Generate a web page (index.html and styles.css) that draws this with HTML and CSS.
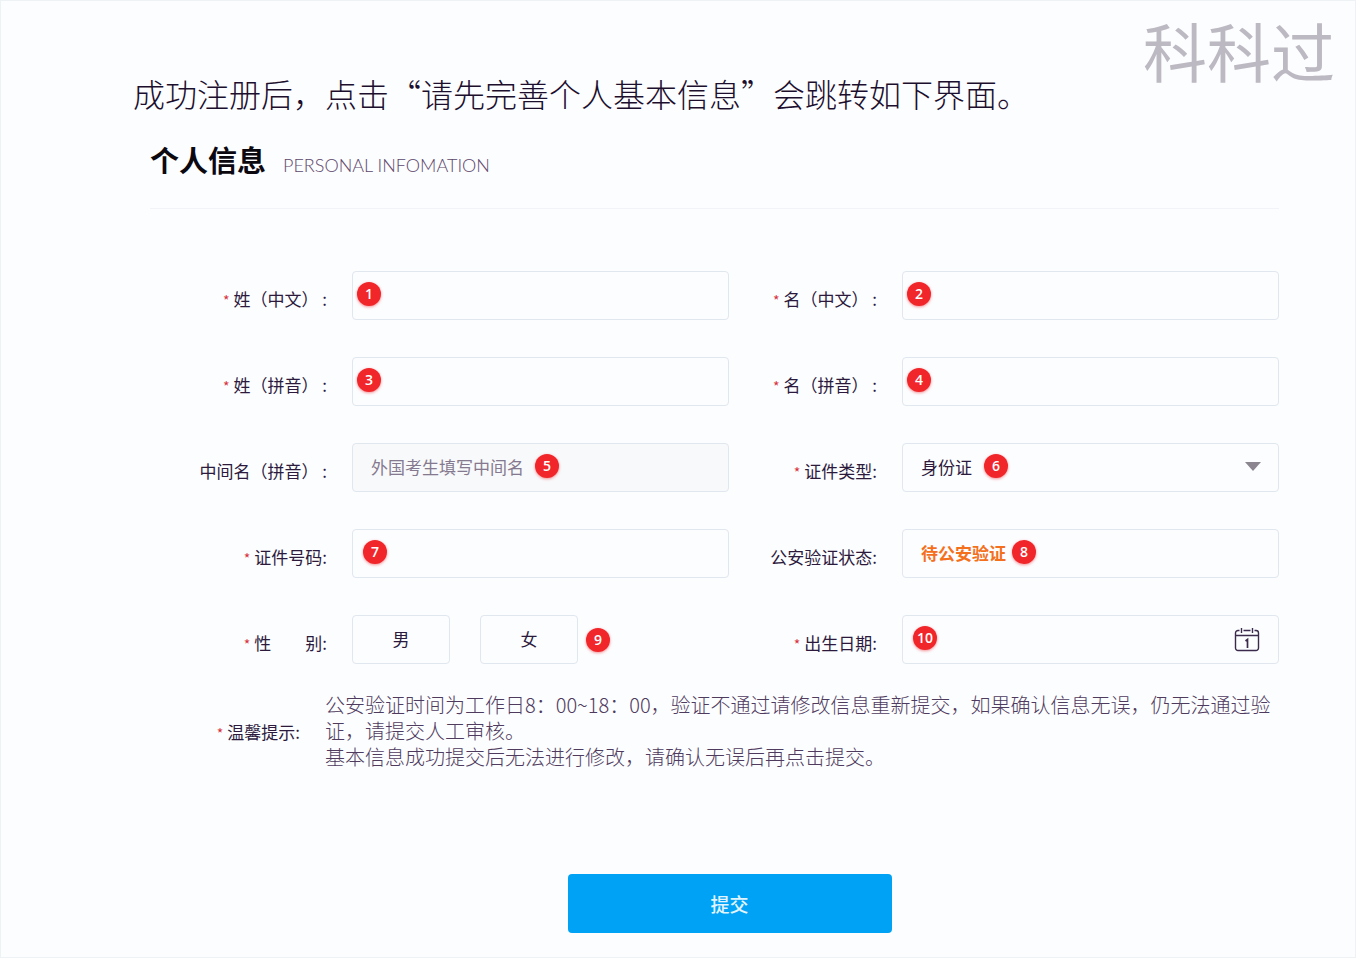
FILE: index.html
```
<!DOCTYPE html>
<html lang="zh-CN">
<head>
  <meta charset="UTF-8" />
  <meta name="viewport" content="width=device-width, initial-scale=1.0"/>
  <title>个人信息</title>
  <link rel="stylesheet" href="styles.css">
</head>
<body>
  <div class="watermark">科科过</div>

  <main class="page">
    <p class="intro">成功注册后&#65292;点击“请先完善个人基本信息”会跳转如下界面。</p>

    <header class="section-title">
      <h1>个人信息</h1>
      <span class="subtitle">PERSONAL INFOMATION</span>
    </header>

    <form>
      <div class="form-grid">
        <label class="label required" for="xing">姓&#65288;中文&#65289; :</label>
        <div class="field">
          <input type="text" id="xing">
          <span class="badge at-edge">1</span>
        </div>
        <label class="label required" for="ming">名&#65288;中文&#65289; :</label>
        <div class="field">
          <input type="text" id="ming">
          <span class="badge at-edge">2</span>
        </div>

        <label class="label required" for="xing-py">姓&#65288;拼音&#65289; :</label>
        <div class="field">
          <input type="text" id="xing-py">
          <span class="badge at-edge">3</span>
        </div>
        <label class="label required" for="ming-py">名&#65288;拼音&#65289; :</label>
        <div class="field">
          <input type="text" id="ming-py">
          <span class="badge at-edge">4</span>
        </div>

        <label class="label" for="middle">中间名&#65288;拼音&#65289; :</label>
        <div class="field">
          <input type="text" id="middle" placeholder="外国考生填写中间名" disabled>
          <span class="badge after-hint">5</span>
        </div>
        <label class="label required" for="id-type">证件类型:</label>
        <div class="field">
          <select id="id-type">
            <option>身份证</option>
          </select>
          <span class="badge after-type">6</span>
          <svg class="arrow" width="16" height="9" viewBox="0 0 16 9"><path d="M0 0h16L8 9z" fill="#8a858e"/></svg>
        </div>

        <label class="label required" for="id-no">证件号码:</label>
        <div class="field">
          <input type="text" id="id-no">
          <span class="badge inset">7</span>
        </div>
        <label class="label" for="status">公安验证状态:</label>
        <div class="field">
          <input type="text" id="status" class="status" value="待公安验证" readonly>
          <span class="badge after-status">8</span>
        </div>

        <span class="label required" id="gender">性&#12288;&#12288;别:</span>
        <div class="choices" role="radiogroup" aria-labelledby="gender">
          <label class="choice"><input type="radio" name="gender">男</label>
          <label class="choice"><input type="radio" name="gender">女</label>
          <span class="badge inline">9</span>
        </div>
        <label class="label required" for="birthday">出生日期:</label>
        <div class="field">
          <input type="text" id="birthday">
          <span class="badge inset">10</span>
          <button type="button" class="calendar" aria-label="选择日期">
            <svg width="26" height="26" viewBox="0 0 26 26" fill="none" stroke="#3b2a4c" stroke-width="1.4">
              <path d="M5.5 3.5H4A2.5 2.5 0 0 0 1.5 6v15A2.5 2.5 0 0 0 4 23.5h18a2.5 2.5 0 0 0 2.5-2.5V6A2.5 2.5 0 0 0 22 3.5h-1.5M9.5 3.5h7M1.5 8.5h23M7.5 1v5M18.5 1v5"/>
              <path d="M11.5 14l2-1.5V21" stroke-width="1.7"/>
            </svg>
          </button>
        </div>
      </div>

      <div class="notice">
        <span class="notice-label required">温馨提示:</span>
        <p class="notice-text">
          公安验证时间为工作日8&#65306;00~18&#65306;00&#65292;验证不通过请修改信息重新提交&#65292;如果确认信息无误&#65292;仍无法通过验证&#65292;请提交人工审核。<br>
          基本信息成功提交后无法进行修改&#65292;请确认无误后再点击提交。
        </p>
      </div>

      <div class="actions">
        <button type="submit" class="submit">提交</button>
      </div>
    </form>
  </main>
</body>
</html>
```
FILE: styles.css
```
* {
  box-sizing: border-box;
}

body {
  margin: 0;
  min-height: 100vh;
  position: relative;
  border: 1px solid #eef2f5;
  background-color: #fcfdff;
  color: #2c1a3d;
  font-family: "Noto Sans CJK SC", sans-serif;
  font-size: 17px;
}

h1,
p {
  margin: 0;
}

.watermark {
  position: absolute;
  top: 8px;
  right: 20px;
  color: #bcb9c2;
  font-size: 64px;
  line-height: 80px;
}

.page {
  padding: 68px 76px 20px 149px;
}

.intro {
  margin-left: -17px;
  color: #1c0f2e;
  font-size: 32px;
  font-weight: 300;
  line-height: 48px;
}

.section-title {
  display: flex;
  align-items: baseline;
  gap: 17px;
  margin-top: 20px;
  padding-bottom: 27px;
  border-bottom: 1px solid #f1f3f9;
}

h1 {
  color: #0b0810;
  font-size: 29px;
  line-height: 44px;
}

.subtitle {
  color: #5d476b;
  font-family: Lato, sans-serif;
  font-size: 18px;
  font-weight: 300;
}

.form-grid {
  display: grid;
  grid-template-columns: 202px 1fr 173px 1fr;
  row-gap: 37px;
  margin-top: 62px;
}

.label {
  padding: 8px 25px 0 0;
  line-height: 40px;
  text-align: right;
  white-space: pre;
}

.required::before {
  content: "*";
  margin-right: 4px;
  color: #d8323c;
  font-size: 14px;
  line-height: 1;
}

.field {
  position: relative;
}

.field input,
.field select {
  display: block;
  width: 100%;
  height: 49px;
  padding: 0 18px 2px;
  border: 1px solid #e0e7ee;
  border-radius: 4px;
  background-color: #fcfdff;
  color: inherit;
  font: inherit;
  appearance: none;
}

.field input:disabled {
  background-color: #f8f9fb;
}

.field input::placeholder {
  color: #85798f;
  opacity: 1;
}

.field .status {
  color: #f4701c;
  font-weight: bold;
}

.badge {
  position: absolute;
  top: 11px;
  width: 24px;
  height: 24px;
  border-radius: 50%;
  background-color: #f0262a;
  box-shadow: 0 1px 3px rgba(240, 38, 42, 0.5);
  color: #fff;
  font-family: "Open Sans", sans-serif;
  font-size: 14px;
  font-weight: 600;
  line-height: 23px;
  text-align: center;
}

.at-edge {
  left: 5px;
}

.inset {
  left: 11px;
}

.after-hint {
  left: 183px;
}

.after-type {
  left: 82px;
}

.after-status {
  left: 110px;
}

.inline {
  position: static;
  margin-left: -22px;
}

.arrow {
  position: absolute;
  top: 19px;
  right: 18px;
  pointer-events: none;
}

.calendar {
  position: absolute;
  top: 12px;
  right: 19px;
  padding: 0;
  border: 0;
  background: none;
  cursor: pointer;
}

.calendar svg {
  display: block;
}

.choices {
  display: flex;
  align-items: center;
  gap: 30px;
}

.choice {
  width: 98px;
  height: 49px;
  border: 1px solid #e0e7ee;
  border-radius: 4px;
  line-height: 46px;
  text-align: center;
  cursor: pointer;
}

.choice input {
  position: absolute;
  opacity: 0;
}

.choice:has(input:checked) {
  border-color: #00a2f5;
}

.notice {
  display: flex;
  align-items: center;
  gap: 25px;
  margin-top: 28px;
}

.notice-label {
  flex: 0 0 150px;
  text-align: right;
}

.notice-text {
  color: #4f3b5e;
  font-size: 20px;
  font-weight: 300;
  line-height: 26px;
}

.actions {
  margin-top: 104px;
  padding-left: 30px;
  text-align: center;
}

.submit {
  width: 324px;
  height: 59px;
  border: 0;
  border-radius: 4px;
  background-color: #00a2f5;
  color: #e2f5ff;
  font-family: inherit;
  font-size: 19px;
  font-weight: 500;
  cursor: pointer;
}

.submit:hover {
  background-color: #0093e0;
}
```
